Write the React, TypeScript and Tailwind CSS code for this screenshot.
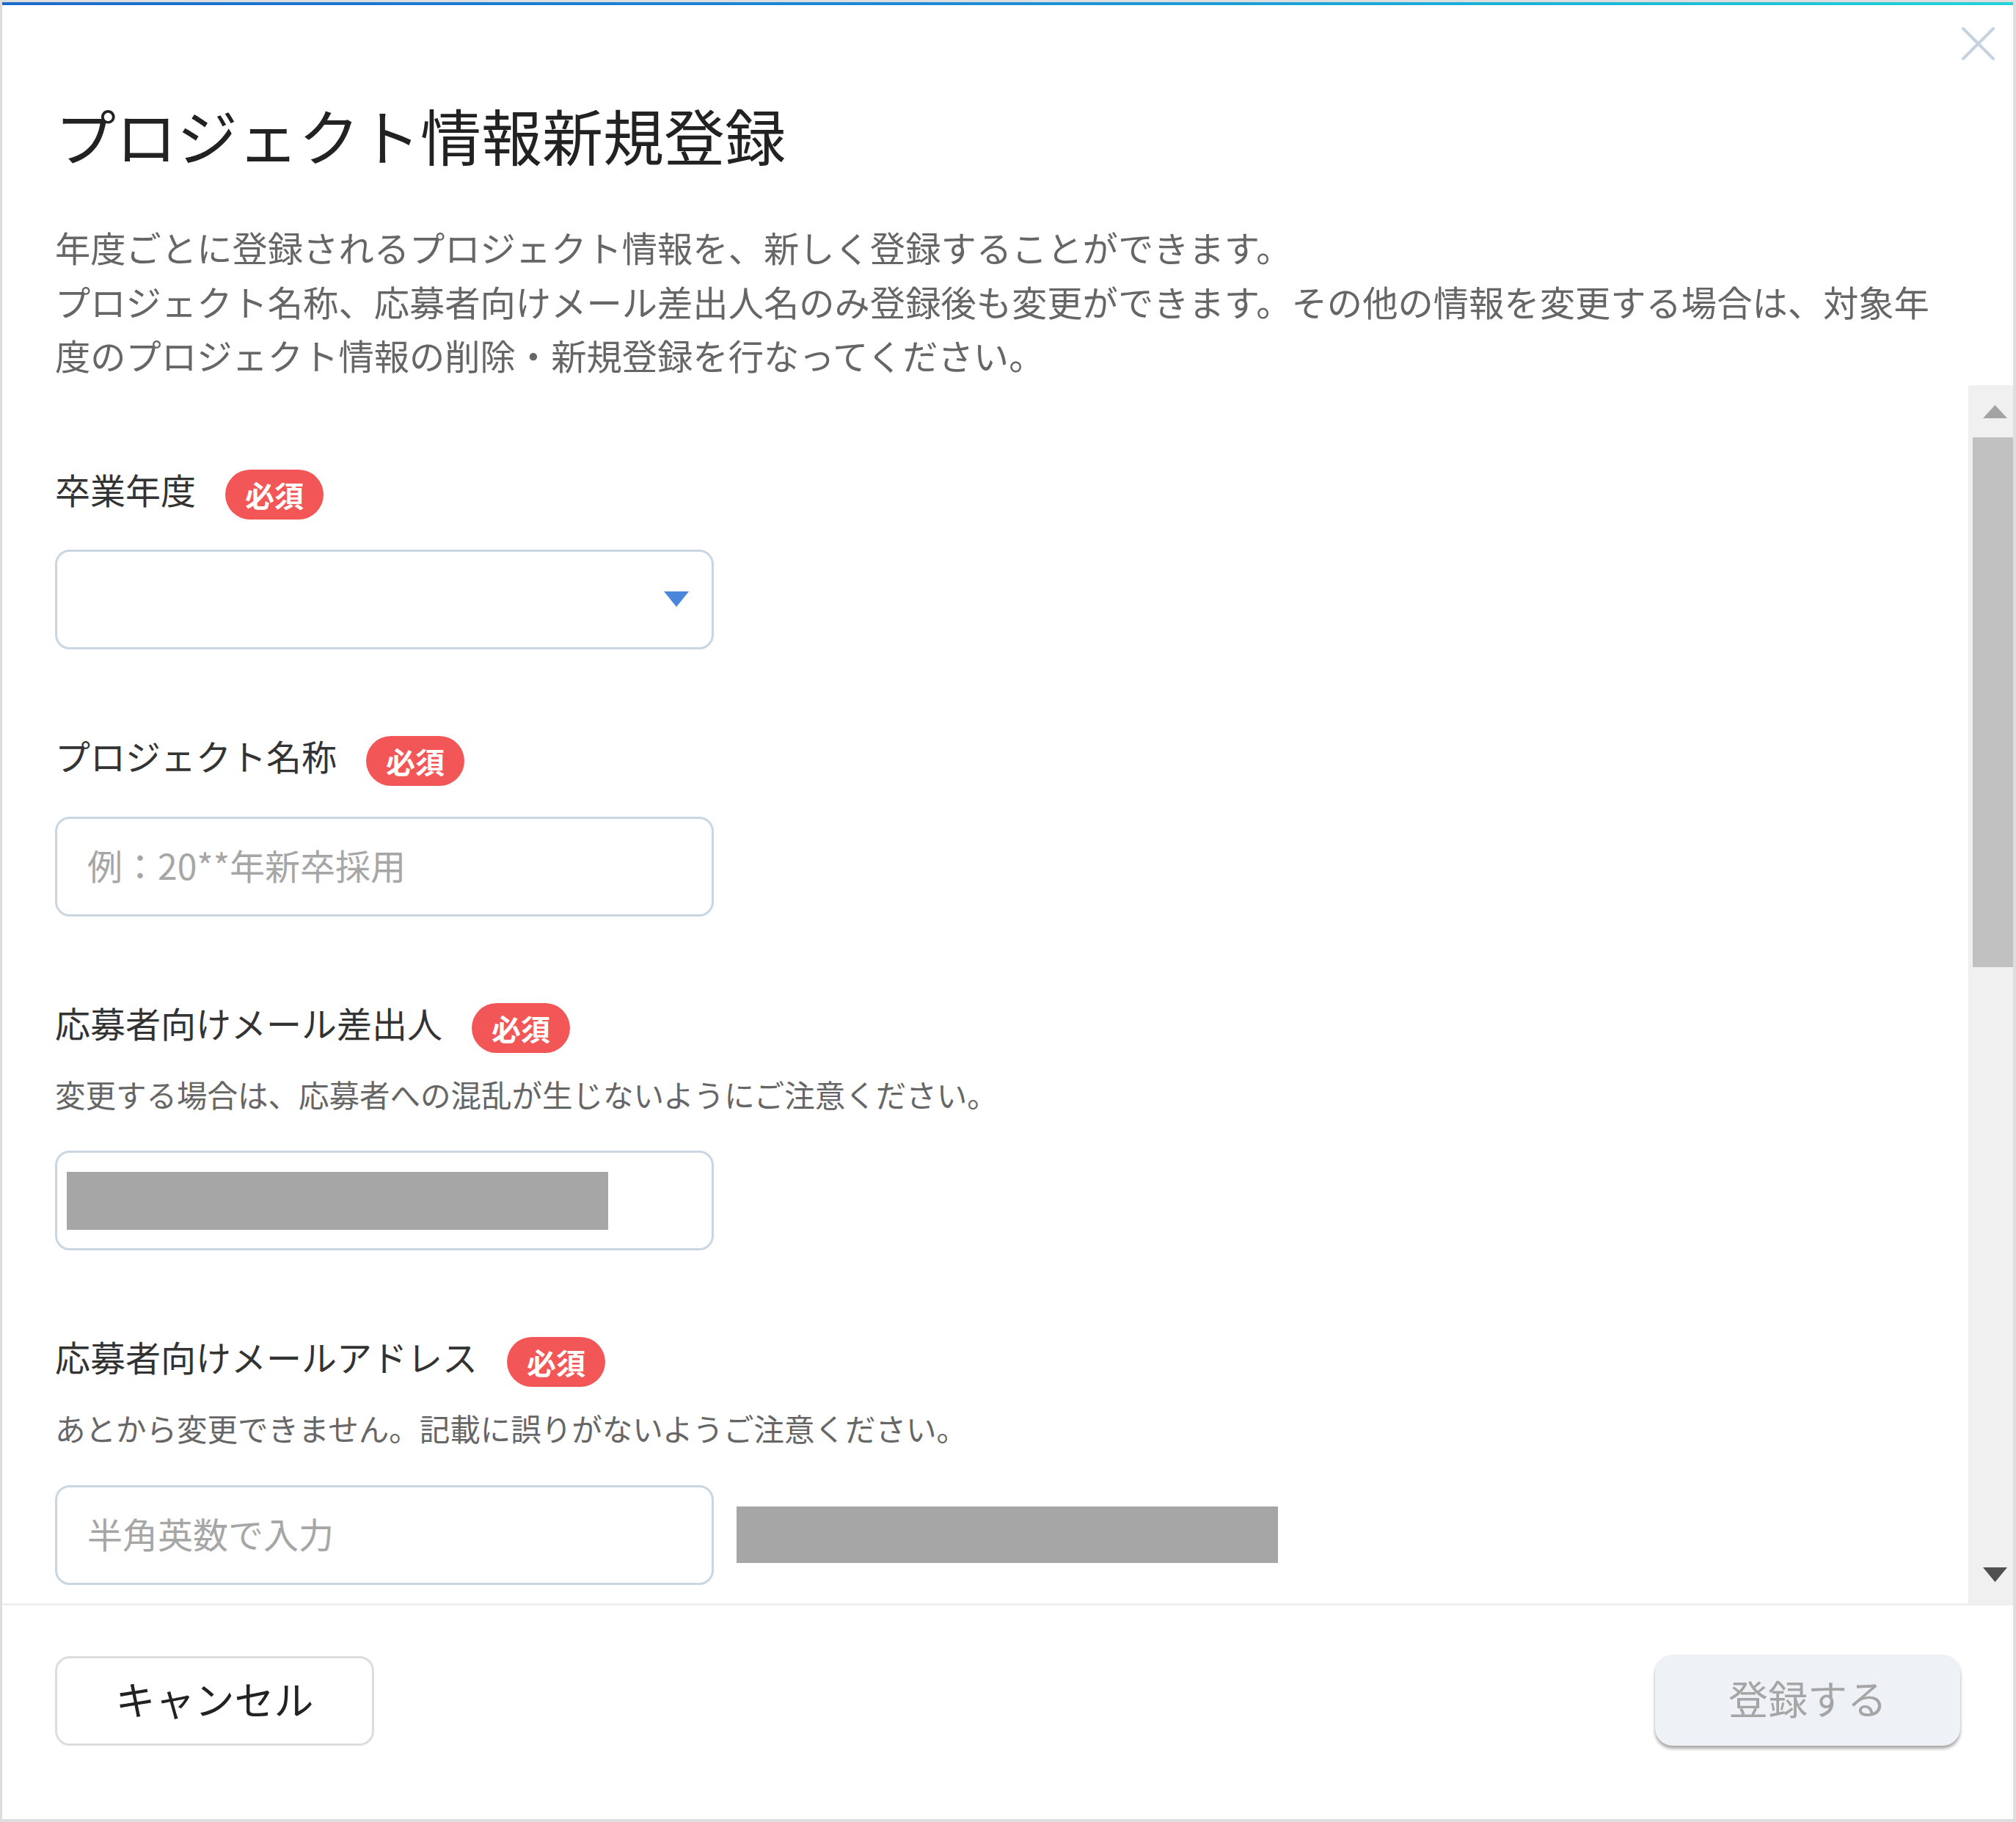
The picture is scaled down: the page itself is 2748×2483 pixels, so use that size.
import React from "react";

const font = "font-['Noto_Sans_CJK_JP','Noto_Sans',sans-serif]";

function Badge() {
  return (
    <span className="ml-[40px] inline-flex h-[68px] items-center rounded-full bg-[#f25656] px-[27px] text-[40px] font-bold leading-none text-white">
      必須
    </span>
  );
}

function Label({ text }: { text: string }) {
  return (
    <div className="flex h-[68px] items-center">
      <span className="mb-[16px] text-[48px] leading-none text-[#333333]">{text}</span>
      <Badge />
    </div>
  );
}

function Helper({ text }: { text: string }) {
  return <p className="mt-[36px] text-[41.5px] leading-none text-[#666666]">{text}</p>;
}

const boxCls =
  "h-[136px] w-[898px] rounded-[20px] border-[3px] border-[#cad7e3] bg-white";

export default function App() {
  return (
    <div
      className={`${font} relative flex h-[2483px] w-[2748px] flex-col border-x-[3px] border-t-[3px] border-b-[4px] border-r-[4px] border-[#dedede] bg-white`}
    >
      <div className="h-[4px] bg-gradient-to-r from-[#1b6bcf] via-[#1d8ed6] to-[#22d4d8]" />

      {/* close */}
      <button className="absolute right-[25px] top-[34px] h-[45px] w-[45px]">
        <svg viewBox="0 0 45 45" className="h-[45px] w-[45px]">
          <path d="M2 2 L43 43 M43 2 L2 43" stroke="#c6d2de" strokeWidth="4" strokeLinecap="round" />
        </svg>
      </button>

      <div className="pb-[4px] pl-[72px] pr-[99px] pt-[135px]">
        <h1 className="text-[83px] font-normal leading-none text-[#222222]">プロジェクト情報新規登録</h1>
        <p className="mt-[75px] text-[48.3px] leading-[73.5px] text-[#666666]">
          年度ごとに登録されるプロジェクト情報を、新しく登録することができます。
          <br />
          プロジェクト名称、応募者向けメール差出人名のみ登録後も変更ができます。その他の情報を変更する場合は、対象年度のプロジェクト情報の削除・新規登録を行なってください。
        </p>
      </div>

      <div className="flex h-[1660px]">
        <div className="flex-1 overflow-hidden px-[72px] pt-[115px]">
          <div className="flex flex-col">
            <Label text="卒業年度" />
            <div className={`${boxCls} mt-[41px] flex items-center justify-end pr-[31px]`}>
              <svg viewBox="0 0 34 21" className="h-[21px] w-[34px]">
                <polygon points="0,0 34,0 17,21" fill="#4a86dc" />
              </svg>
            </div>
          </div>

          <div className="mt-[118px] flex flex-col">
            <Label text="プロジェクト名称" />
            <input
              readOnly
              placeholder="例：20**年新卒採用"
              className={`${boxCls} mt-[42px] pb-[6px] pl-[41px] text-[48px] text-[#333333] outline-none placeholder:text-[#a6a6a6]`}
            />
          </div>

          <div className="mt-[118px] flex flex-col">
            <Label text="応募者向けメール差出人" />
            <Helper text="変更する場合は、応募者への混乱が生じないようにご注意ください。" />
            <div className={`${boxCls} mt-[56px] flex items-center pl-[13px]`}>
              <div className="h-[79px] w-[738px] bg-[#a6a6a6]" />
            </div>
          </div>

          <div className="mt-[118px] flex flex-col">
            <Label text="応募者向けメールアドレス" />
            <Helper text="あとから変更できません。記載に誤りがないようご注意ください。" />
            <div className="mt-[56px] flex items-center gap-[31px]">
              <input
                readOnly
                placeholder="半角英数で入力"
                className={`${boxCls} pb-[6px] pl-[41px] text-[48px] text-[#333333] outline-none placeholder:text-[#a6a6a6]`}
              />
              <div className="h-[77px] w-[738px] bg-[#a6a6a6]" />
            </div>
          </div>
        </div>

        {/* scrollbar */}
        <div className="flex w-[61px] flex-col bg-[#f0f0f0]">
          <div className="mt-[27px] pl-[20px]">
            <svg viewBox="0 0 33 18" className="h-[18px] w-[33px]">
              <polygon points="16.5,0 33,18 0,18" fill="#a3a3a3" />
            </svg>
          </div>
          <div className="ml-[6px] mt-[26px] h-[722px] bg-[#c1c1c1]" />
          <div className="mb-[29px] mt-auto pl-[20px]">
            <svg viewBox="0 0 33 20" className="h-[20px] w-[33px]">
              <polygon points="0,0 33,0 16.5,20" fill="#505050" />
            </svg>
          </div>
        </div>
      </div>

      <div className="h-[3px] bg-[#efefef]" />

      <div className="flex flex-1 items-start justify-between px-[72px] pt-[69px]">
        <button className="h-[122px] w-[435px] rounded-[20px] border-[3px] border-[#dddddd] bg-white pb-[6px] text-[54px] leading-none text-[#222222]">
          キャンセル
        </button>
        <button className="-mt-[2px] h-[124px] w-[416px] rounded-[24px] bg-[#eef2f6] pb-[6px] text-[54px] leading-none text-[#a5a5a5] shadow-[0_4px_4px_rgba(0,0,0,0.35)]">
          登録する
        </button>
      </div>
    </div>
  );
}
